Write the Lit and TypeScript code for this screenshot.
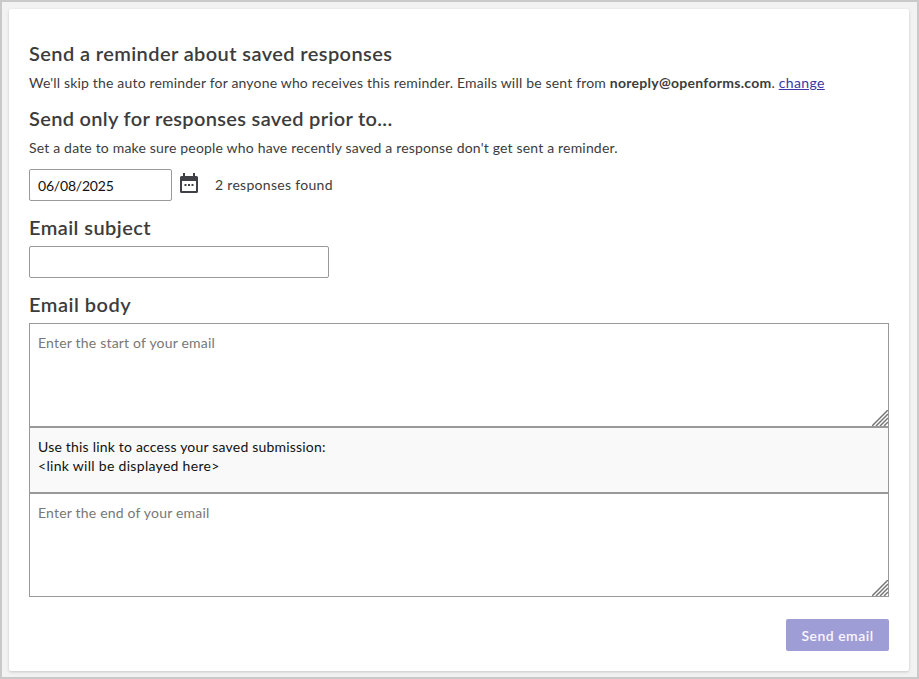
import { LitElement, html, css } from "lit";
import { customElement } from "lit/decorators.js";

@customElement("app-root")
export class AppRoot extends LitElement {
  static styles = css`
    :host {
      display: block;
      box-sizing: border-box;
      width: 919px;
      height: 679px;
      background: #f2f2f2;
      border: 2px solid #c9c9c9;
      padding: 7px 8px 6px 7px;
      font-family: Lato, "Noto Sans", sans-serif;
      color: #3c3c3c;
      overflow: hidden;
    }
    * { box-sizing: border-box; }
    .card {
      height: 662px;
      background: #fff;
      border-radius: 2px;
      box-shadow: 0 1px 3px rgba(0, 0, 0, 0.18);
      padding: 31px 20px 0;
      display: flex;
      flex-direction: column;
    }
    h2 {
      margin: 0;
      font-size: 20px;
      line-height: 27px;
      font-weight: 600;
    }
    .hero { letter-spacing: 0.4px; }
    .prior { margin-top: 12px; letter-spacing: 0.32px; }
    p {
      margin: 6px 0 0;
      font-size: 14px;
      line-height: 20px;
    }
    .lead { letter-spacing: 0.18px; }
    a { color: #3a35a8; text-decoration: underline; letter-spacing: 0.36px; }
    b { font-weight: 700; letter-spacing: 0.27px; }
    .date-row {
      display: flex;
      align-items: center;
      margin-top: 11px;
      height: 32px;
    }
    input, textarea {
      display: block;
      font: inherit;
      font-size: 14px;
      color: #111;
      background: #fff;
      border: 1px solid #999;
      outline: none;
    }
    input {
      height: 32px;
      border-radius: 2px;
      padding: 0 8px;
    }
    .date { width: 143px; letter-spacing: -0.2px; flex: none; }
    .subject { width: 300px; margin-top: 5px; }
    .cal { margin-left: 8px; width: 18px; height: 20px; flex: none; margin-top: -4px; }
    .found { margin-left: 17px; font-size: 14px; letter-spacing: 0.3px; padding-bottom: 2px; }
    .label { margin-top: 13px; letter-spacing: 0.5px; }
    .label.first { margin-top: 13px; letter-spacing: 0.43px; }
    .body { margin-top: 5px; display: flex; flex-direction: column; }
    .area { position: relative; height: 104px; }
    textarea {
      width: 860px;
      height: 104px;
      padding: 9px 8px;
      line-height: 20px;
      letter-spacing: 0.2px;
      resize: none;
    }
    textarea::placeholder { color: #777; opacity: 1; }
    .grip {
      position: absolute;
      right: 1px;
      bottom: 1px;
      width: 16px;
      height: 16px;
      pointer-events: none;
    }
    .fixed {
      height: 66px;
      background: #f9f9f9;
      border: 1px solid #999;
      padding: 9px 8px;
      font-size: 14px;
      line-height: 19px;
      color: #111;
      letter-spacing: 0.2px;
    }
    .fixed span { letter-spacing: 0.3px; }
    .actions { display: flex; justify-content: flex-end; margin-top: 22px; }
    button {
      width: 103px;
      height: 32px;
      border: 0;
      border-radius: 2px;
      background: #9f9dd6;
      color: #f7f7fd;
      font: inherit;
      font-size: 14px;
      font-weight: 600;
      letter-spacing: 0.5px;
    }
  `;

  private grip() {
    return html`<svg class="grip" viewBox="0 0 16 16" aria-hidden="true">
      <path stroke="#777" stroke-width="1.5" fill="none" d="M0 16 16 0M4 16 16 4M8 16l8-8M12 16l4-4" />
    </svg>`;
  }

  render() {
    return html`
      <div class="card">
        <h2 class="hero">Send a reminder about saved responses</h2>
        <p class="lead">We'll skip the auto reminder for anyone who receives this reminder. Emails will be sent from <b>noreply@openforms.com</b>. <a href="#">change</a></p>
        <h2 class="prior">Send only for responses saved prior to...</h2>
        <p class="lead">Set a date to make sure people who have recently saved a response don't get sent a reminder.</p>
        <div class="date-row">
          <input class="date" type="text" .value=${"06/08/2025"} />
          <svg class="cal" viewBox="0 0 18 20" aria-hidden="true">
            <path fill="#3f4147" fill-rule="evenodd" d="M3 3V0h2v3h8V0h2v3h1.500A1.500 1.500 0 0 1 18 4.500v14a1.500 1.500 0 0 1-1.500 1.500h-15A1.500 1.500 0 0 1 0 18.500v-14A1.500 1.500 0 0 1 1.500 3zM2 8v10h14V8z"/>
            <path fill="#3f4147" d="M4.500 11h2v2h-2zM8 11h2v2H8zM11.500 11h2v2h-2z"/>
          </svg>
          <span class="found">2 responses found</span>
        </div>
        <h2 class="label first">Email subject</h2>
        <input class="subject" type="text" />
        <h2 class="label">Email body</h2>
        <div class="body">
          <div class="area"><textarea placeholder="Enter the start of your email"></textarea>${this.grip()}</div>
          <div class="fixed">Use this link to access your saved submission:<br /><span>&lt;link will be displayed here&gt;</span></div>
          <div class="area"><textarea placeholder="Enter the end of your email"></textarea>${this.grip()}</div>
        </div>
        <div class="actions"><button>Send email</button></div>
      </div>
    `;
  }
}
